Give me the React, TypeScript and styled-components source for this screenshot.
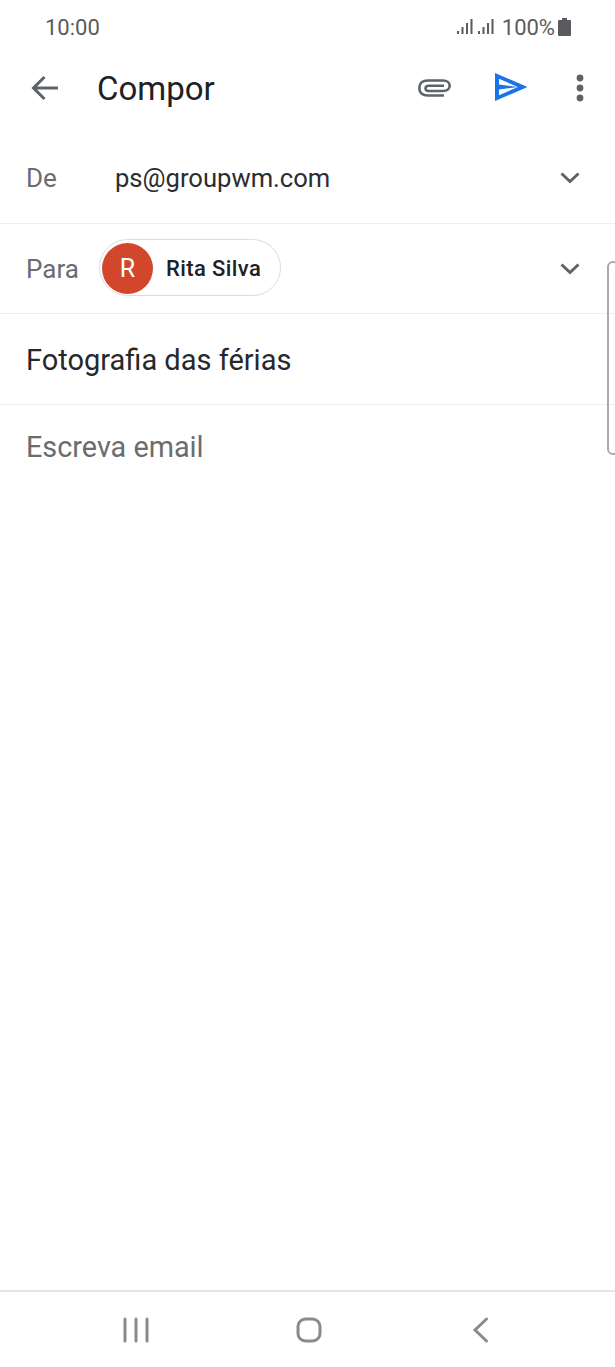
import React from "react";
import styled, { createGlobalStyle } from "styled-components";

const GlobalStyle = createGlobalStyle`
  html, body {
    margin: 0;
    padding: 0;
    background: #fff;
    font-family: Roboto, "Liberation Sans", sans-serif;
  }
`;

const Screen = styled.div`
  position: relative;
  width: 615px;
  height: 1367px;
  display: flex;
  flex-direction: column;
  overflow: hidden;
  background: #fff;
`;

const StatusBar = styled.div`
  height: 54px;
  display: flex;
  align-items: center;
  justify-content: space-between;
  padding: 0 44px 0 45px;
  color: #5a5b5e;
  font-size: 22px;
`;

const StatusRight = styled.div`
  display: flex;
  align-items: center;
  gap: 3px;
`;

const Signal = styled.svg`
  margin-right: 5px;
`;

const Toolbar = styled.div`
  height: 68px;
  display: flex;
  align-items: center;
  padding: 0 30.5px 0 30px;
`;

const Title = styled.div`
  margin-left: 35px;
  flex: 1;
  font-size: 33px;
  color: #202124;
`;

const ToolIcons = styled.div`
  display: flex;
  align-items: center;
  gap: 44px;
`;

const SendIcon = styled.svg`
  margin-bottom: 2px;
`;

const Dots = styled.svg`
  margin-left: 2.5px;
`;

const Form = styled.div`
  padding-top: 11px;
  flex: 1;
`;

const Row = styled.div<{ $height: number }>`
  height: ${(p) => p.$height}px;
  display: flex;
  align-items: center;
  padding: 0 33px 0 26px;
  border-bottom: 1px solid #efefef;
  box-sizing: border-box;
`;

const Label = styled.span<{ $width: number }>`
  width: ${(p) => p.$width}px;
  font-size: 26px;
  color: #6a6c70;
`;

const Value = styled.span`
  flex: 1;
  font-size: 25.6px;
  color: #2b2d30;
`;

const Chip = styled.div`
  height: 57px;
  box-sizing: border-box;
  display: flex;
  align-items: center;
  gap: 13px;
  padding: 1px 19px 0 2px;
  border: 1.5px solid #dadce0;
  border-radius: 29px;
`;

const Avatar = styled.div`
  width: 51px;
  height: 51px;
  border-radius: 50%;
  background: #d2472c;
  color: #fff;
  display: flex;
  align-items: center;
  justify-content: center;
  font-size: 25px;
`;

const ChipName = styled.span`
  font-size: 22px;
  font-weight: 500;
  letter-spacing: 0.4px;
  color: #202124;
`;

const ChipWrap = styled.div`
  flex: 1;
  display: flex;
  padding-bottom: 2px;
`;

const Subject = styled.span`
  padding-top: 2px;
  font-size: 29px;
  color: #26282b;
`;

const Body = styled.div`
  padding: 25px 26px;
  font-size: 28.8px;
  color: #6a6c70;
`;

const Handle = styled.div`
  position: absolute;
  left: 607px;
  top: 261px;
  width: 12px;
  height: 194px;
  box-sizing: border-box;
  border: 2px solid #aaa;
  border-radius: 8px;
`;

const NavBar = styled.div`
  height: 75px;
  display: flex;
  align-items: center;
  justify-content: space-between;
  padding: 0 120px 0 122px;
  border-top: 2px solid #e6e6e6;
`;

const Chevron = () => (
  <svg width="24" height="24" viewBox="0 0 24 24" fill="none" stroke="#5f6368" strokeWidth="3">
    <path d="M3.5 7.5 12 15.5 20.5 7.5" />
  </svg>
);

export default function App() {
  return (
    <Screen>
      <GlobalStyle />
      <StatusBar>
        <span>10:00</span>
        <StatusRight>
          <Signal width="37" height="18" viewBox="0 0 37 18" fill="#5a5b5e">
            <rect x="0" y="13" width="2" height="3" />
            <rect x="4.5" y="9" width="2" height="7" />
            <rect x="9" y="5" width="2" height="11" />
            <rect x="13.5" y="1" width="2" height="15" />
            <rect x="21" y="13" width="2" height="3" />
            <rect x="25.5" y="9" width="2" height="7" />
            <rect x="30" y="5" width="2" height="11" />
            <rect x="34.5" y="1" width="2" height="15" />
          </Signal>
          <span>100%</span>
          <svg width="13" height="18" viewBox="0 0 13 18" fill="#5a5b5e">
            <path d="M4 0h5v2h3a1 1 0 0 1 1 1v14a1 1 0 0 1-1 1H1a1 1 0 0 1-1-1V3a1 1 0 0 1 1-1h3z" />
          </svg>
        </StatusRight>
      </StatusBar>
      <Toolbar>
        <svg width="32" height="32" viewBox="0 0 32 32" fill="none" stroke="#5f6368" strokeWidth="3">
          <path d="M28 16H4M14.5 5 3.5 16 14.5 27" />
        </svg>
        <Title>Compor</Title>
        <ToolIcons>
          <svg width="33" height="20" viewBox="0 0 33 20" fill="none" stroke="#5f6368" strokeWidth="2.6">
            <path d="M26 17.500H9.500C4.500 17.500 1.300 14.500 1.300 10S4.500 2.500 9.500 2.500H25c4 0 6.700 2.200 6.700 5.300S29 13 25 13H11c-2 0-3.500-.8-3.500-2.600S9 7.800 11 7.800h15" />
          </svg>
          <SendIcon width="33" height="28" viewBox="0 0 33 28" fill="#1a73e8" fillRule="evenodd">
            <path d="M0 0 32.500 14 0 28ZM4 5.800V11.500L23 13.900ZM4 16.500V22.200L23 14.100Z" />
          </SendIcon>
          <Dots width="10" height="28" viewBox="0 0 10 28" fill="#5f6368">
            <circle cx="5" cy="4" r="3.4" />
            <circle cx="5" cy="14" r="3.4" />
            <circle cx="5" cy="24" r="3.4" />
          </Dots>
        </ToolIcons>
      </Toolbar>
      <Form>
        <Row $height={91}>
          <Label $width={89}>De</Label>
          <Value>ps@groupwm.com</Value>
          <Chevron />
        </Row>
        <Row $height={90}>
          <Label $width={73}>Para</Label>
          <ChipWrap>
            <Chip>
              <Avatar>R</Avatar>
              <ChipName>Rita Silva</ChipName>
            </Chip>
          </ChipWrap>
          <Chevron />
        </Row>
        <Row $height={91}>
          <Subject>Fotografia das férias</Subject>
        </Row>
        <Body>Escreva email</Body>
      </Form>
      <Handle />
      <NavBar>
        <svg width="28" height="28" viewBox="0 0 28 28" fill="none" stroke="#8a8a8a" strokeWidth="3" strokeLinecap="round">
          <path d="M3 3v22M14 3v22M25 3v22" />
        </svg>
        <svg width="28" height="28" viewBox="0 0 28 28" fill="none" stroke="#8a8a8a" strokeWidth="3">
          <rect x="3" y="3" width="22" height="22" rx="7.500" />
        </svg>
        <svg width="28" height="28" viewBox="0 0 28 28" fill="none" stroke="#8a8a8a" strokeWidth="3" strokeLinecap="round">
          <path d="M19.500 3 8 14 19.500 25" />
        </svg>
      </NavBar>
    </Screen>
  );
}
